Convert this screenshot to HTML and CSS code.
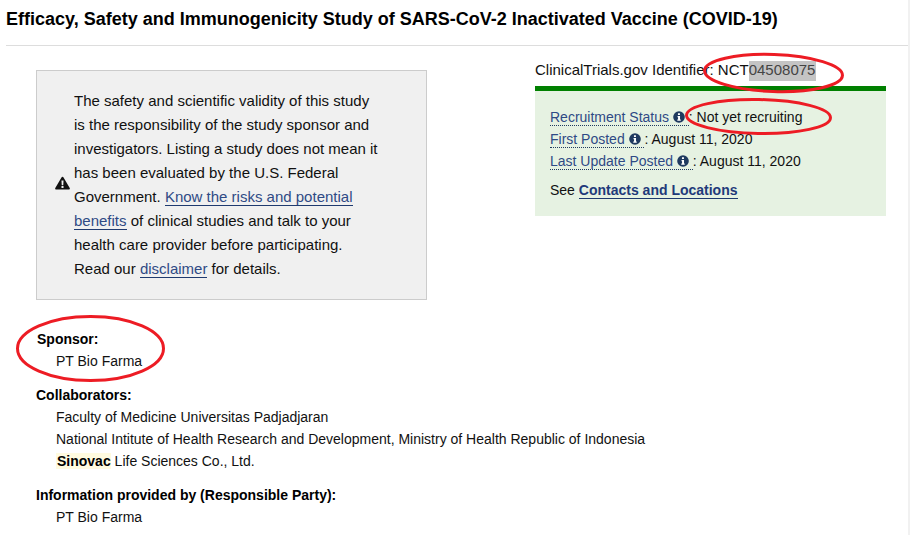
FILE: index.html
```html
<!DOCTYPE html>
<html lang="en">
<head>
<meta charset="utf-8">
<title>Study</title>
<link rel="stylesheet" href="styles.css">
</head>
<body>
<div class="page">
  <h1 class="title">Efficacy, Safety and Immunogenicity Study of SARS-CoV-2 Inactivated Vaccine (COVID-19)</h1>
  <div class="top">
    <div class="notice">
      <svg class="warn" viewBox="0 0 16 14" aria-hidden="true"><path d="M8 0.3c.5 0 .9.3 1.1.7l6.600 11.200c.4.8-.1 1.600-1 1.600H1.300c-.9 0-1.400-.8-1-1.600L6.900 1c.2-.4.6-.7 1.100-.7z" fill="#111"/><path d="M6.900 4.300h2.200l-.3 5h-1.600zM6.900 10.200h2.200v2h-2.200z" fill="#f0f0f0"/></svg>
      <p class="notice-text">The safety and scientific validity of this study<br>is the responsibility of the study sponsor and<br>investigators. Listing a study does not mean it<br>has been evaluated by the U.S. Federal<br>Government. <a class="link" href="#">Know the risks and potential<br>benefits</a> of clinical studies and talk to your<br>health care provider before participating.<br>Read our <a class="link" href="#">disclaimer</a> for details.</p>
    </div>
    <div class="status-col">
      <div class="identifier">ClinicalTrials.gov Identifier: NCT<span class="selected">04508075</span></div>
      <div class="status">
        <div class="row"><span class="term">Recruitment Status <svg class="info" viewBox="0 0 14 14" aria-hidden="true"><circle cx="7" cy="7" r="6.800" fill="#1f3a5f"/><path d="M5.800 2.700h2.300v2H5.800zM5.300 5.800h2.900v4.100h.8v1.400H5v-1.400h.9V7.200h-.6z" fill="#fff"/></svg> </span>: Not yet recruiting</div>
        <div class="row"><span class="term">First Posted <svg class="info" viewBox="0 0 14 14" aria-hidden="true"><circle cx="7" cy="7" r="6.800" fill="#1f3a5f"/><path d="M5.800 2.700h2.300v2H5.800zM5.300 5.800h2.900v4.100h.8v1.400H5v-1.400h.9V7.200h-.6z" fill="#fff"/></svg> </span>: August 11, 2020</div>
        <div class="row"><span class="term">Last Update Posted <svg class="info" viewBox="0 0 14 14" aria-hidden="true"><circle cx="7" cy="7" r="6.800" fill="#1f3a5f"/><path d="M5.800 2.700h2.300v2H5.800zM5.300 5.800h2.900v4.100h.8v1.400H5v-1.400h.9V7.200h-.6z" fill="#fff"/></svg> </span>: August 11, 2020</div>
        <div class="see">See <a class="link strong" href="#">Contacts and Locations</a></div>
      </div>
    </div>
  </div>
  <div class="parties">
    <div class="party">
      <div class="label sponsor">Sponsor:</div>
      <div class="value">PT Bio Farma</div>
    </div>
    <div class="party">
      <div class="label">Collaborators:</div>
      <div class="value">Faculty of Medicine Universitas Padjadjaran</div>
      <div class="value">National Intitute of Health Research and Development, Ministry of Health Republic of Indonesia</div>
      <div class="value"><b class="mark">Sinovac</b> Life Sciences Co., Ltd.</div>
    </div>
    <div class="party">
      <div class="label">Information provided by (Responsible Party):</div>
      <div class="value">PT Bio Farma</div>
    </div>
  </div>
  <svg class="marks" viewBox="0 0 910 535" aria-hidden="true">
    <ellipse cx="773.500" cy="73" rx="69" ry="18.500" transform="rotate(2 773.500 73)"/>
    <ellipse cx="758.500" cy="116.500" rx="72" ry="17" transform="rotate(1 758.500 116.500)"/>
    <ellipse cx="90.500" cy="348.500" rx="73" ry="32"/>
  </svg>
</div>
</body>
</html>
```

FILE: styles.css
```css
* { box-sizing: border-box; }
html, body { margin: 0; padding: 0; background: #fff; }
body {
  font-family: "Liberation Sans", Arial, sans-serif;
  color: #111;
  overflow: hidden;
}
.page {
  position: relative;
  width: 910px;
  height: 535px;
  overflow: hidden;
  border-right: 2px solid #f1f1f1;
}
.title {
  margin: 0 0 0 6px;
  height: 46px;
  padding-top: 8px;
  font-size: 18px;
  line-height: 22px;
  font-weight: 700;
  color: #000;
  border-bottom: 1px solid #ddd;
}
.top {
  display: flex;
  padding: 24px 22px 0 36px;
  gap: 108px;
}
.notice {
  width: 391px;
  height: 230px;
  background: #f0f0f0;
  border: 1px solid #ccc;
  display: flex;
  align-items: center;
  padding-left: 18px;
}
.warn { width: 15px; height: 14px; flex: none; margin: 0 4px 4px 0; }
.notice-text {
  margin: 0;
  font-size: 15px;
  line-height: 24px;
  white-space: nowrap;
}
.link {
  color: #2f4a85;
  text-decoration: none;
  border-bottom: 1px solid #1f3a6f;
}
.status-col { width: 351px; flex: none; }
.identifier {
  font-size: 15px;
  line-height: 20px;
  margin-top: -10px;
  height: 26px;
  white-space: nowrap;
}
.selected { background: #c4c4c4; color: #444; padding: 0 1px 3px 0; }
.status {
  height: 130px;
  background: #e6f2e2;
  border-top: 5px solid #008000;
  padding: 15px 15px 0;
  font-size: 14px;
  line-height: 22px;
}
.row { white-space: nowrap; }
.term {
  color: #2f4a85;
  border-bottom: 1px dotted #1f3a5f;
}
.info { width: 12px; height: 12px; vertical-align: -1px; }
.see { margin-top: 7px; }
.strong { font-weight: 700; color: #1f3a7a; }
.parties {
  padding: 28px 0 0 36px;
  font-size: 14px;
  line-height: 22px;
}
.party { margin-bottom: 12px; }
.label { font-weight: 700; color: #000; }
.sponsor { padding-left: 1px; }
.value { padding-left: 20px; white-space: nowrap; }
.mark { background: #fffbe0; padding: 0 0 0 1px; color: #000; }
.marks {
  position: absolute;
  left: 0;
  top: 0;
  width: 910px;
  height: 535px;
  pointer-events: none;
}
.marks ellipse { fill: none; stroke: #ed1c24; stroke-width: 3; }
```
